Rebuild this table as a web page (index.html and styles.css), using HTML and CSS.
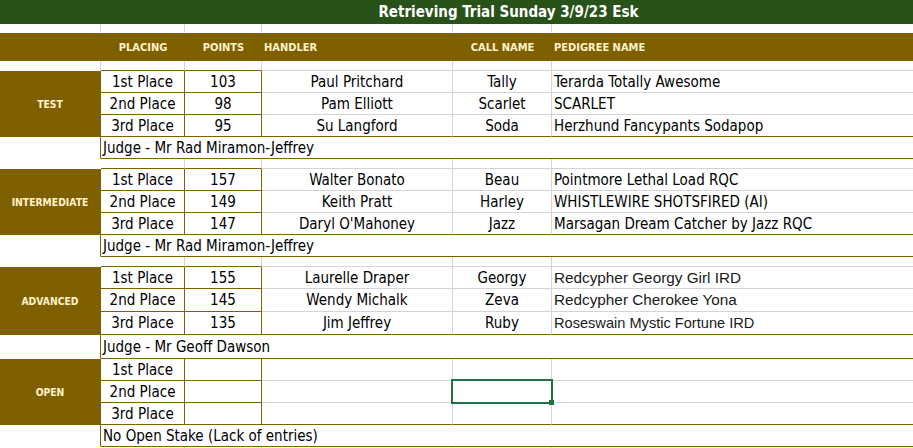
FILE: index.html
```html
<!DOCTYPE html>
<html lang="en">
<head>
<meta charset="utf-8">
<title>Retrieving Trial Sunday 3/9/23 Esk</title>
<link rel="stylesheet" href="styles.css">
</head>
<body>
<div class="sheet">
  <div class="title">Retrieving Trial Sunday 3/9/23 Esk</div>

  <div class="c nb"></div><div class="c nb"></div><div class="c nb"></div><div class="c nb"></div><div class="c nb"></div><div class="c nb f"></div>

  <div class="h"></div>
  <div class="h ctr">PLACING</div>
  <div class="h ctr">POINTS</div>
  <div class="h lft">HANDLER</div>
  <div class="h ctr">CALL NAME</div>
  <div class="h lft">PEDIGREE NAME</div>

  <div class="c nb"></div><div class="c gb"></div><div class="c gb"></div><div class="c"></div><div class="c"></div><div class="c f"></div>

  <!-- TEST -->
  <div class="label">TEST</div>
  <div class="c gr gb ctr">1st Place</div><div class="c gr gb ctr">103</div><div class="c ctr">Paul Pritchard</div><div class="c ctr">Tally</div><div class="c f lft">Terarda Totally Awesome</div>
  <div class="c gr gb ctr">2nd Place</div><div class="c gr gb ctr">98</div><div class="c ctr">Pam Elliott</div><div class="c ctr">Scarlet</div><div class="c f lft">SCARLET</div>
  <div class="c gr gb ctr">3rd Place</div><div class="c gr gb ctr">95</div><div class="c gb ctr">Su Langford</div><div class="c gb ctr">Soda</div><div class="c gb f lft">Herzhund Fancypants Sodapop</div>
  <div class="c nb gr"></div><div class="c gb f judge">Judge - Mr Rad Miramon-Jeffrey</div>
  <div class="c nb nr"></div><div class="c gb"></div><div class="c gb"></div><div class="c"></div><div class="c"></div><div class="c f"></div>

  <!-- INTERMEDIATE -->
  <div class="label">INTERMEDIATE</div>
  <div class="c gr gb ctr">1st Place</div><div class="c gr gb ctr">157</div><div class="c ctr">Walter Bonato</div><div class="c ctr">Beau</div><div class="c f lft">Pointmore Lethal Load RQC</div>
  <div class="c gr gb ctr">2nd Place</div><div class="c gr gb ctr">149</div><div class="c ctr">Keith Pratt</div><div class="c ctr">Harley</div><div class="c f lft">WHISTLEWIRE SHOTSFIRED (AI)</div>
  <div class="c gr gb ctr">3rd Place</div><div class="c gr gb ctr">147</div><div class="c gb ctr">Daryl O'Mahoney</div><div class="c gb ctr">Jazz</div><div class="c gb f lft">Marsagan Dream Catcher by Jazz RQC</div>
  <div class="c nb gr"></div><div class="c gb f judge">Judge - Mr Rad Miramon-Jeffrey</div>
  <div class="c nb nr"></div><div class="c gb"></div><div class="c gb"></div><div class="c"></div><div class="c"></div><div class="c f"></div>

  <!-- ADVANCED -->
  <div class="label">ADVANCED</div>
  <div class="c gr gb ctr">1st Place</div><div class="c gr gb ctr">155</div><div class="c ctr">Laurelle Draper</div><div class="c ctr">Georgy</div><div class="c f lft arial">Redcypher Georgy Girl IRD</div>
  <div class="c gr gb ctr">2nd Place</div><div class="c gr gb ctr">145</div><div class="c ctr">Wendy Michalk</div><div class="c ctr">Zeva</div><div class="c f lft arial">Redcypher Cherokee Yona</div>
  <div class="c gr gb ctr">3rd Place</div><div class="c gr gb ctr">135</div><div class="c gb ctr">Jim Jeffrey</div><div class="c gb ctr">Ruby</div><div class="c gb f lft arial sm">Roseswain Mystic Fortune IRD</div>
  <div class="c nb gr"></div><div class="c gb f judge">Judge - Mr Geoff Dawson</div>

  <!-- OPEN -->
  <div class="label">OPEN</div>
  <div class="c gr gb ctr">1st Place</div><div class="c gr gb"></div><div class="c"></div><div class="c"></div><div class="c f"></div>
  <div class="c gr gb ctr">2nd Place</div><div class="c gr gb"></div><div class="c"></div><div class="c selcell"><div class="sel"><span class="handle"></span></div></div><div class="c f"></div>
  <div class="c gr gb ctr">3rd Place</div><div class="c gr gb"></div><div class="c gb"></div><div class="c gb"></div><div class="c gb f"></div>
  <div class="c nb gr"></div><div class="c gb f judge">No Open Stake (Lack of entries)</div>

  <div class="c nb nr"></div><div class="c nb"></div><div class="c nb"></div><div class="c nb"></div><div class="c nb"></div><div class="c nb f"></div>
</div>
</body>
</html>
```

FILE: styles.css
```css
html, body {
  margin: 0;
  padding: 0;
  background: #ffffff;
  overflow: hidden;
}

.sheet {
  width: 913px;
  display: grid;
  grid-template-columns: 101px 84px 77px 191px 99px 1fr;
  grid-template-rows:
    24px 9px 28px 10px
    22px 22px 22px 22px 10px
    22px 22px 22px 22px 10px
    22px 23px 23px 24px
    22px 22px 22px 22px
    22px;
  font-family: "DejaVu Sans Condensed", "DejaVu Sans", sans-serif;
  font-size: 15px;
  color: #000;
}

.title {
  grid-column: 1 / -1;
  background: #29511a;
  color: #ffffff;
  font-weight: bold;
  font-size: 15px;
  display: flex;
  align-items: center;
  justify-content: center;
  padding-left: 104px;
  white-space: nowrap;
}

.c {
  box-sizing: border-box;
  border-right: 1px solid #d4d4d4;
  border-bottom: 1px solid #d4d4d4;
  display: flex;
  align-items: center;
  white-space: nowrap;
  overflow: hidden;
  min-width: 0;
}

.f { border-right: 0; }
.nb { border-bottom-color: #ffffff; }
.nr { border-right-color: #ffffff; }
.gb { border-bottom-color: #7f6000; }
.gr { border-right-color: #7f6000; }

.ctr { justify-content: center; }
.lft { justify-content: flex-start; padding-left: 2px; }

.h {
  background: #7f6000;
  color: #fff2cc;
  font-weight: bold;
  font-size: 11px;
  display: flex;
  align-items: center;
  white-space: nowrap;
}

.label {
  grid-row: span 3;
  box-sizing: border-box;
  background: #7f6000;
  border-right: 1px solid #7f6000;
  border-bottom: 1px solid #7f6000;
  color: #fff2cc;
  font-weight: bold;
  font-size: 10.3px;
  display: flex;
  align-items: center;
  justify-content: center;
}

.judge {
  grid-column: 2 / -1;
  padding-left: 2px;
}

.arial {
  font-family: "Liberation Sans", Arial, sans-serif;
  font-size: 15.3px;
  color: #1a1a1a;
}

.arial.sm { font-size: 14.6px; }

.selcell { position: relative; overflow: visible; }

.sel {
  position: absolute;
  left: -2px;
  top: -2px;
  width: 102px;
  height: 25px;
  box-sizing: border-box;
  border: 2px solid #217346;
  z-index: 2;
}

.handle {
  position: absolute;
  left: 96px;
  top: 19px;
  width: 5px;
  height: 5px;
  background: #217346;
}
```
